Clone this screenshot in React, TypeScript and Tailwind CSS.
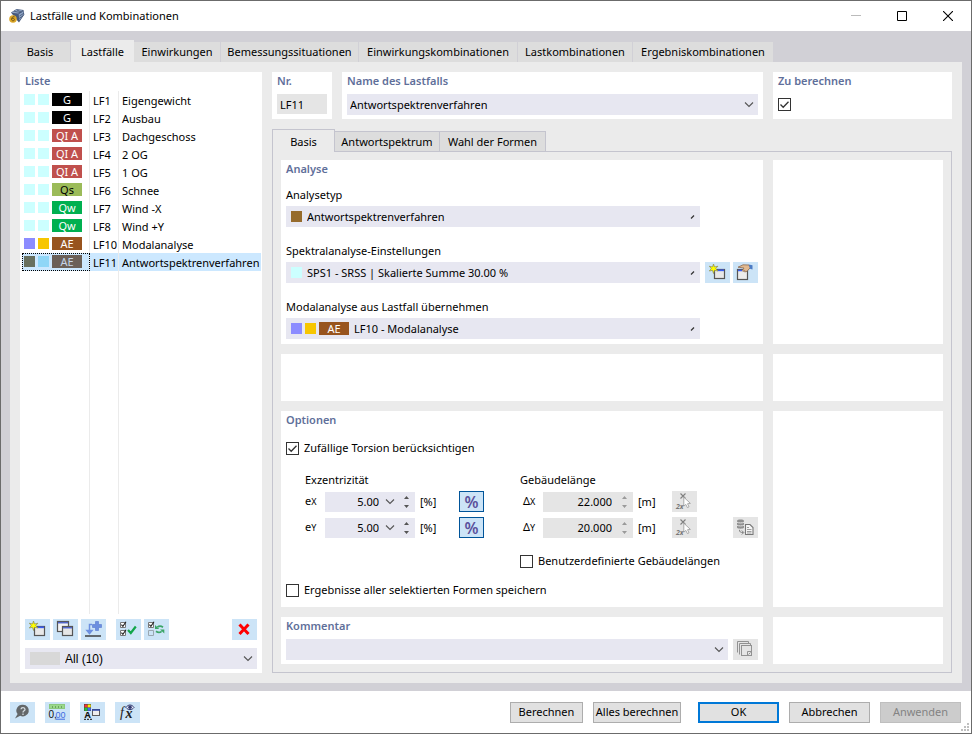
import React from 'react';

type LoadCase = {
  no: string;
  name: string;
  tag: string;
  badge: string;
  left: string;
  right: string;
  selected?: boolean;
};

const loadCases: LoadCase[] = [
  { no: 'LF1', name: 'Eigengewicht', tag: 'G', badge: 'bg-black text-white', left: 'bg-[#ccffff]', right: 'bg-[#ccffff]' },
  { no: 'LF2', name: 'Ausbau', tag: 'G', badge: 'bg-black text-white', left: 'bg-[#ccffff]', right: 'bg-[#ccffff]' },
  { no: 'LF3', name: 'Dachgeschoss', tag: 'QI A', badge: 'bg-[#c0504d] text-white', left: 'bg-[#ccffff]', right: 'bg-[#ccffff]' },
  { no: 'LF4', name: '2 OG', tag: 'QI A', badge: 'bg-[#c0504d] text-white', left: 'bg-[#ccffff]', right: 'bg-[#ccffff]' },
  { no: 'LF5', name: '1 OG', tag: 'QI A', badge: 'bg-[#c0504d] text-white', left: 'bg-[#ccffff]', right: 'bg-[#ccffff]' },
  { no: 'LF6', name: 'Schnee', tag: 'Qs', badge: 'bg-[#9bbb59] text-black', left: 'bg-[#ccffff]', right: 'bg-[#ccffff]' },
  { no: 'LF7', name: 'Wind -X', tag: 'Qw', badge: 'bg-[#00b050] text-white', left: 'bg-[#ccffff]', right: 'bg-[#ccffff]' },
  { no: 'LF8', name: 'Wind +Y', tag: 'Qw', badge: 'bg-[#00b050] text-white', left: 'bg-[#ccffff]', right: 'bg-[#ccffff]' },
  { no: 'LF10', name: 'Modalanalyse', tag: 'AE', badge: 'bg-[#98541e] text-white', left: 'bg-[#8c8cff]', right: 'bg-[#f7c600]' },
  { no: 'LF11', name: 'Antwortspektrenverfahren', tag: 'AE', badge: 'bg-[#6b6058] text-[#c5d5e8]', left: 'bg-[#68705f]', right: 'bg-[#8fd6f7]', selected: true },
];

const mainTabs = [
  { label: 'Basis', width: 'w-[61px]' },
  { label: 'Lastfälle', width: 'w-[63px]', active: true },
  { label: 'Einwirkungen', width: 'w-[87px]' },
  { label: 'Bemessungssituationen', width: 'w-[138px]' },
  { label: 'Einwirkungskombinationen', width: 'w-[159px]' },
  { label: 'Lastkombinationen', width: 'w-[115px]' },
  { label: 'Ergebniskombinationen', width: 'w-[141px]' },
];

/* Icons */

const Svg = ({ children }: { children: React.ReactNode }) => (
  <svg width="25" height="21" viewBox="0 0 25 21" fill="none" aria-hidden="true" className="block shrink-0">
    {children}
  </svg>
);

const NewIcon = () => (
  <Svg>
    <rect x="9.5" y="7.5" width="10" height="9" fill="#e8e8e8" stroke="#555" strokeWidth="1.2" />
    <path d="M12.5 8.3H19" stroke="#3a5cf0" strokeWidth="1.7" />
    <path d="M8.5 2l1 3 3.4-.8-2.2 2.4L12.9 9l-3.4-.7-1 3.2-1-3.2-3.2.7 2-2.4-2-2.4 3.2.8z" fill="#ffff00" stroke="#8a8a50" strokeWidth=".7" />
  </Svg>
);

const CopyIcon = () => (
  <Svg>
    <rect x="4.5" y="2.5" width="11" height="10" fill="#f3f3f3" stroke="#555" strokeWidth="1.2" />
    <path d="M5 3.7h10" stroke="#5064c8" strokeWidth="1.5" />
    <rect x="9.5" y="7.5" width="10" height="9" fill="#e6e6e6" stroke="#555" strokeWidth="1.2" />
    <path d="M10 8.7h9" stroke="#5064c8" strokeWidth="1.5" />
  </Svg>
);

const ImportIcon = () => (
  <Svg>
    <path d="M14.5 2.5h3v3h3v3h-3v3h-3v-3h-3v-3h3z" fill="#6c8fe0" stroke="#5577cc" strokeWidth=".6" />
    <path d="M11 5.5H8.5V13M6 11.5l2.5 3 2.5-3z" stroke="#6c8fe0" strokeWidth="1.5" />
    <path d="M4 17h16" stroke="#333" strokeWidth="1.4" />
  </Svg>
);

const SelectAllIcon = () => (
  <Svg>
    <path d="M4.5 3.5h5v5h-5zM4.5 11.5h5v5h-5z" fill="#fff" stroke="#777" />
    <path d="M5.4 5.7l1.5 1.7L10 2.7M5.4 13.7l1.5 1.7 3.1-4.7" stroke="#222" strokeWidth="1.1" />
    <path d="M12 11l2.8 3 5-6.5" stroke="#12a64a" strokeWidth="2.2" />
  </Svg>
);

const InvertIcon = () => (
  <Svg>
    <path d="M4.5 3.5h5v5h-5z" fill="#fff" stroke="#777" />
    <path d="M4.5 11.5h5v5h-5z" stroke="#9aa7b0" />
    <path d="M5.4 5.7l1.5 1.7L10 2.7" stroke="#222" strokeWidth="1.1" />
    <path d="M19 8.2c-2-1.5-4.3-1.2-5.6 0M12 12.3c2 1.5 4.3 1.2 5.6 0" stroke="#3ba567" strokeWidth="1.7" />
    <path d="M11 6v4h4.2zM20.3 14.4v-4h-4.2z" fill="#3ba567" />
  </Svg>
);

const DeleteIcon = () => (
  <Svg>
    <path d="M7.5 5.5l9 9.5M16.5 5.5l-9 9.5" stroke="#f00" strokeWidth="3" />
  </Svg>
);

const EditIcon = () => (
  <Svg>
    <rect x="4.5" y="7.5" width="10" height="10" fill="#ececec" stroke="#555" strokeWidth="1.2" />
    <path d="M5 8.5h4" stroke="#3a5cf0" strokeWidth="1.5" />
    <path d="M5 5.2l5-2.4 6 .2 1.5 2.4L14 9.3l-2.3.7.2-1.4-2 .8-.2-1.5L11 6z" fill="#e2b98f" stroke="#8b6b52" strokeWidth=".8" />
    <path d="M15.7 2.5l3.8.8v4.3l-2.5-.9z" fill="#4c7bc4" />
  </Svg>
);

const PickIcon = () => (
  <Svg>
    <path d="M8.5 2.5l5 5M13.5 2.5l-5 5" stroke="#808080" strokeWidth="1.1" />
    <path d="M11.8 6.2v9l2-1.8 1.6 3.2 1.6-.8-1.5-3.1 2.9-.3z" fill="#fff" stroke="#999" strokeWidth=".8" />
    <text x="4" y="17.5" fontSize="7" fill="#777" className="font-bold italic">2x</text>
  </Svg>
);

const DatabaseIcon = () => (
  <Svg>
    <path d="M4 3.7c0-1.6 7-1.6 7 0v6.8c0 1.6-7 1.6-7 0z" fill="#909090" />
    <path d="M4 5.2c1.5 1 5.5 1 7 0M4 8.2c1.5 1 5.5 1 7 0" stroke="#e5e5e5" />
    <path d="M6.5 12.8c0 2.2.8 2.7 3.8 2.7M8.8 13.5l2 2-2 2" stroke="#808080" />
    <path d="M12.5 7.5h4.5l3 3v7h-7.5z" fill="#f6f6f6" stroke="#777" strokeWidth="1.1" />
    <path d="M14 10.5h2M14 12.5h4.5M14 14.5h4.5M14 16h4.5" stroke="#888" strokeWidth=".8" />
  </Svg>
);

const PagesIcon = () => (
  <Svg>
    <path d="M4.5 13.5v-11h11v2M6.5 15.5v-11h11v2" stroke="#929292" />
    <rect x="8.5" y="6.5" width="10" height="10" stroke="#929292" />
    <path d="M14.5 12.5h4v4h-4zM15.5 15.5l2-2" stroke="#929292" />
  </Svg>
);

const HelpIcon = () => (
  <Svg>
    <path d="M13 2.8a6 5.8 0 1 1-2.8 11L5 16.5l2.6-4.4A6 5.8 0 0 1 13 2.8z" fill="#636769" />
    <path d="M11 7.2c.2-2.2 4-2.2 4 .2 0 1.4-2 1.4-2 3.1M13 11.5v1.4" stroke="#d5dde2" strokeWidth="1.3" />
  </Svg>
);

const UnitsIcon = () => (
  <Svg>
    <rect x="4.5" y="2.5" width="15" height="4" fill="#9bd88b" stroke="#8bc97d" />
    <path d="M7.5 4v2M10.5 4v2M13.5 4v2M16.5 4v2" stroke="#6aa55f" />
    <text x="3.5" y="15.5" fontSize="10" fill="#111" className="font-['Liberation_Sans',sans-serif]">0,</text>
    <text x="10.5" y="15.5" fontSize="9" fill="#3d6be0" className="font-['Liberation_Sans',sans-serif]">00</text>
    <path d="M11 17.2h9" stroke="#3d6be0" />
  </Svg>
);

const DisplayIcon = () => (
  <Svg>
    <rect x="4" y="2" width="7" height="7" fill="#444" />
    <rect x="4.5" y="2.5" width="3" height="3" fill="#f33" />
    <rect x="7.7" y="2.5" width="3" height="3" fill="#fe0" />
    <rect x="4.5" y="5.7" width="3" height="3" fill="#2c3" />
    <rect x="7.7" y="5.7" width="3" height="3" fill="#46f" />
    <text x="4.5" y="16" fontSize="9" fill="#111" className="font-bold">A</text>
    <path d="M4 17.3h8" stroke="#111" strokeDasharray="2 1" />
    <rect x="12.5" y="7.5" width="7" height="6" fill="#eee" stroke="#5c5c5c" />
    <path d="M12 8h8" stroke="#2b44a8" strokeWidth="1.5" />
  </Svg>
);

const FormulaIcon = () => (
  <Svg>
    <text x="5" y="14.5" fontSize="14" fill="#222" className="font-['Liberation_Serif',serif] italic">f</text>
    <text x="10.5" y="15.5" fontSize="14" fill="#222" className="font-['Liberation_Serif',serif] italic font-bold">x</text>
    <path d="M11 5.5c2-3.3 6-3.3 8 0-2 2.8-6 2.8-8 0z" fill="#e8eefc" stroke="#333a70" />
    <circle cx="15" cy="5.2" r="1.8" fill="#333a70" />
  </Svg>
);

const AppIcon = () => (
  <svg width="16" height="16" viewBox="0 0 16 16" aria-hidden="true">
    <path d="M2 4.5L7.5 1l7 1 .8 4.5L10 14.5 7 11z" fill="#46597c" />
    <path d="M2.5 4.8L7.7 1.6l6 .9-4.5 3zM9.7 6.2l4.5-3 .4 3.3-4.3 6z" fill="#8ea4c6" />
    <path d="M5 3.2l6 1.3M8 2l4.5 2.2M10.5 8l4.3-2.7M10 10.5l4.5-3" stroke="#2c3a57" strokeWidth=".6" />
    <circle cx="4" cy="11" r="3.8" fill="#dda829" />
    <path d="M5.5 8.8C3.5 8.3 2.6 9.8 2.6 11.3c0 2 2.8 2 2.8.2 0-1.4-2-1.6-2.7-.3" fill="none" stroke="#705312" />
  </svg>
);

const Chevron = ({ small }: { small?: boolean }) =>
  small ? (
    <svg width="10" height="8" viewBox="0 0 10 8" fill="none" aria-hidden="true" className="pointer-events-none mr-[2px] shrink-0">
      <path d="M3 5.5L6 2.5" stroke="#333" strokeWidth="1.3" />
    </svg>
  ) : (
    <svg width="10" height="8" viewBox="0 0 10 8" fill="none" aria-hidden="true" className="pointer-events-none mr-1 shrink-0">
      <path d="M1 1.5l4 4 4-4" stroke="#555" strokeWidth="1.1" />
    </svg>
  );

/* Controls */

type ToolProps = { label: string; disabled?: boolean; pressed?: boolean; children: React.ReactNode };

const ToolButton = ({ label, disabled, pressed, children }: ToolProps) => (
  <button
    type="button"
    aria-label={label}
    aria-pressed={pressed}
    disabled={disabled}
    className={`flex h-[21px] w-[25px] shrink-0 items-center justify-center ${disabled ? 'bg-[#e5e5e5]' : 'bg-[#cce4f7]'} ${pressed ? 'border border-[#005499]' : ''}`}
  >
    {children}
  </button>
);

type ComboProps = { id: string; label?: string; value: string; small?: boolean; children?: React.ReactNode };

const Combo = ({ id, label, value, small, children }: ComboProps) => (
  <div className="flex h-[21px] min-w-0 flex-1 items-center bg-[#e7e7f1]">
    {children}
    <select id={id} aria-label={label} defaultValue={value} className="h-full min-w-0 flex-1 appearance-none bg-transparent px-[3px] outline-none">
      <option value={value}>{value}</option>
    </select>
    <Chevron small={small} />
  </div>
);

const Swatch = ({ color }: { color: string }) => <span className={`size-[11px] shrink-0 ${color}`} />;

const Badge = ({ color, text }: { color: string; text: string }) => (
  <span className={`flex h-[13px] w-[30px] shrink-0 items-center justify-center leading-[13px] whitespace-nowrap ${color}`}>{text}</span>
);

const Tick = ({ id, label, checked }: { id: string; label?: string; checked?: boolean }) => (
  <span className="grid size-[13px] shrink-0">
    <input id={id} type="checkbox" aria-label={label} defaultChecked={checked} className="peer col-start-1 row-start-1 size-[13px] appearance-none border border-[#333] bg-white" />
    <svg viewBox="0 0 13 13" fill="none" aria-hidden="true" className="pointer-events-none invisible col-start-1 row-start-1 size-[13px] peer-checked:visible">
      <path d="M2.5 6.5L5.2 9.3l5.3-5.6" stroke="#333" strokeWidth="1.3" />
    </svg>
  </span>
);

const Check = ({ id, label, checked }: { id: string; label: string; checked?: boolean }) => (
  <div className="flex h-4 items-center gap-[5px]">
    <Tick id={id} checked={checked} />
    <label htmlFor={id}>{label}</label>
  </div>
);

const Card = ({ title, className = '', children }: { title?: string; className?: string; children?: React.ReactNode }) => (
  <section className={`bg-white px-[5px] ${className}`}>
    {title && <h2 className="h-[22px] font-semibold leading-[18px] text-[#5f6f9a]">{title}</h2>}
    {children}
  </section>
);

type SpinProps = { id: string; axis: string; symbol: string; value: string; unit: string; list?: boolean; disabled?: boolean };

const SpinField = ({ id, axis, symbol, value, unit, list, disabled }: SpinProps) => (
  <>
    <label htmlFor={id} className="w-5 shrink-0">
      {symbol}
      <span className="text-[9px]">{axis}</span>
    </label>
    <div className={`flex h-5 w-[90px] shrink-0 items-center ${disabled ? 'bg-[#e5e5e5]' : 'bg-[#e7e7f1]'}`}>
      <input id={id} type="text" defaultValue={value} disabled={disabled} className={`h-full min-w-0 flex-1 bg-transparent text-right outline-none ${list ? 'pr-[6px]' : 'pr-[9px]'}`} />
      {list && <Chevron />}
      <svg width="7" height="14" viewBox="0 0 7 14" aria-hidden="true" className={`mr-[5px] shrink-0 ${list ? 'ml-1' : ''}`}>
        <path d="M3.5 1L6 4H1zM3.5 13L6 10H1z" fill={disabled ? '#9a9a9a' : '#555'} />
      </svg>
    </div>
    <span className="ml-[5px] w-[34px] shrink-0">{unit}</span>
  </>
);

const App: React.FC = () => {
  return (
    <div className="relative flex min-h-screen flex-col border border-[#6b6b6b] bg-white font-['Noto_Sans',sans-serif] text-[11px] leading-4 text-black">
      {/* Title bar */}
      <header className="flex h-[30px] items-center pl-2">
        <AppIcon />
        <h1 className="ml-[5px] flex-1">Lastfälle und Kombinationen</h1>
        <button type="button" aria-label="Minimieren" disabled className="flex h-full w-[46px] items-center justify-center">
          <svg width="10" height="10" viewBox="0 0 10 10"><path d="M0 4.5h10" stroke="#bbb" /></svg>
        </button>
        <button type="button" aria-label="Maximieren" className="flex h-full w-[46px] items-center justify-center">
          <svg width="10" height="10" viewBox="0 0 10 10"><path d="M.5.5h9v9h-9z" fill="none" stroke="#000" /></svg>
        </button>
        <button type="button" aria-label="Schließen" className="flex h-full w-[46px] items-center justify-center">
          <svg width="10" height="10" viewBox="0 0 10 10"><path d="M0 0l10 10M10 0L0 10" stroke="#000" strokeWidth="1.1" /></svg>
        </button>
      </header>

      <main className="flex flex-1 flex-col bg-[#d1d0d6] px-[9px] pt-[9px] pb-2">
        <nav className="flex h-[22px] items-end" role="tablist">
          {mainTabs.map((tab) => (
            <button
              key={tab.label}
              type="button"
              role="tab"
              aria-selected={!!tab.active}
              className={`shrink-0 whitespace-nowrap ${tab.width} ${tab.active ? 'h-[22px] bg-[#ebebeb] pt-[2px]' : 'h-5 border-r border-[#d1d0d6] bg-[#dddddd]'}`}
            >
              {tab.label}
            </button>
          ))}
        </nav>

        <div className="flex flex-1 gap-[10px] bg-[#ebebeb] p-[10px]">
          {/* Load case list */}
          <section className="flex w-[242px] shrink-0 flex-col bg-white">
            <h2 className="h-[19px] px-[5px] font-semibold leading-[18px] text-[#5f6f9a]">Liste</h2>
            <div className="grid flex-1 pr-px pl-[2px]">
              <table className="w-full table-fixed border-separate border-spacing-0">
                <colgroup>
                  <col className="w-[68px]" />
                  <col className="w-[29px]" />
                  <col />
                </colgroup>
                <tbody>
                  {loadCases.map((lc) => (
                    <tr key={lc.no} className={lc.selected ? 'bg-[#cce8ff]' : ''}>
                      <td className={`h-[18px] border-r border-[#ebebeb] p-0 ${lc.selected ? 'outline-1 -outline-offset-1 outline-dotted outline-black' : ''}`}>
                        <div className="flex items-center gap-[3px] pb-px pl-[2px]">
                          <Swatch color={lc.left} />
                          <Swatch color={lc.right} />
                          <Badge color={lc.badge} text={lc.tag} />
                        </div>
                      </td>
                      <td className="h-[18px] border-r border-[#ebebeb] p-0 pt-[2px] pl-[3px]">{lc.no}</td>
                      <td className="h-[18px] p-0 pt-[2px] pl-[3px] whitespace-nowrap">{lc.name}</td>
                    </tr>
                  ))}
                  <tr aria-hidden="true">
                    <td className="border-r border-[#ebebeb] p-0" />
                    <td className="border-r border-[#ebebeb] p-0" />
                    <td className="p-0" />
                  </tr>
                </tbody>
              </table>
            </div>
            <div className="flex gap-[3px] px-[5px] pt-[5px]">
              <ToolButton label="Neu"><NewIcon /></ToolButton>
              <ToolButton label="Kopieren"><CopyIcon /></ToolButton>
              <ToolButton label="Importieren"><ImportIcon /></ToolButton>
              <div className="ml-[7px] flex flex-1 gap-[3px]">
                <ToolButton label="Alle auswählen"><SelectAllIcon /></ToolButton>
                <ToolButton label="Auswahl umkehren"><InvertIcon /></ToolButton>
              </div>
              <ToolButton label="Löschen"><DeleteIcon /></ToolButton>
            </div>
            <div className="flex px-[5px] pt-2 pb-1 font-['Liberation_Sans',sans-serif] text-xs">
              <Combo id="filter" label="Filter" value="All (10)">
                <span className="mr-[2px] ml-[5px] h-[13px] w-[30px] bg-[#d8d8d8]" />
              </Combo>
            </div>
          </section>

          {/* Details of the selected load case */}
          <div className="flex min-w-0 flex-1 flex-col">
            <div className="flex gap-[10px]">
              <Card title="Nr." className="w-[60px] shrink-0 pb-[5px]">
                <input type="text" readOnly aria-label="Nr." value="LF11" className="block h-5 w-full bg-[#e5e5e5] px-[3px] outline-none" />
              </Card>
              <Card title="Name des Lastfalls" className="min-w-0 flex-1 pb-1">
                <div className="flex">
                  <Combo id="name" label="Name des Lastfalls" value="Antwortspektrenverfahren" />
                </div>
              </Card>
              <Card title="Zu berechnen" className="w-[179px] shrink-0">
                <div className="flex h-[21px] items-center">
                  <Tick id="calculate" label="Zu berechnen" checked />
                </div>
              </Card>
            </div>

            <div className="mt-[10px] flex items-end" role="tablist">
              <button type="button" role="tab" aria-selected="true" className="z-10 -mb-px h-[23px] w-[63px] border border-b-0 border-[#c4c4ce] bg-[#ebebeb] pt-[2px]">Basis</button>
              <button type="button" role="tab" aria-selected="false" className="h-5 w-[105px] border border-b-0 border-l-0 border-[#c4c4ce] bg-[#dddddd]">Antwortspektrum</button>
              <button type="button" role="tab" aria-selected="false" className="h-5 w-[106px] border border-b-0 border-l-0 border-[#c4c4ce] bg-[#dddddd]">Wahl der Formen</button>
            </div>

            <div className="grid flex-1 grid-cols-[minmax(0,1fr)_170px] grid-rows-[184px_47px_1fr_47px] gap-[10px] border border-[#c4c4ce] p-2">
              <Card title="Analyse">
                <div className="grid grid-cols-[minmax(0,1fr)_53px] gap-x-[5px]">
                  <label htmlFor="type" className="col-span-2 mt-[5px] mb-[3px]">Analysetyp</label>
                  <Combo id="type" value="Antwortspektrenverfahren" small>
                    <span className="mr-[2px] ml-[5px] flex"><Swatch color="bg-[#966b2c]" /></span>
                  </Combo>
                  <label htmlFor="spectral" className="col-span-2 mt-4 mb-[3px]">Spektralanalyse-Einstellungen</label>
                  <Combo id="spectral" value="SPS1 - SRSS | Skalierte Summe 30.00 %" small>
                    <span className="mr-[2px] ml-[5px] flex"><Swatch color="bg-[#ccffff]" /></span>
                  </Combo>
                  <div className="flex gap-[3px]">
                    <ToolButton label="Neue Einstellungen"><NewIcon /></ToolButton>
                    <ToolButton label="Einstellungen bearbeiten"><EditIcon /></ToolButton>
                  </div>
                  <label htmlFor="modal" className="col-span-2 mt-4 mb-[3px]">Modalanalyse aus Lastfall übernehmen</label>
                  <Combo id="modal" value="LF10 - Modalanalyse" small>
                    <span className="mr-[2px] ml-[5px] flex items-center gap-[3px]">
                      <Swatch color="bg-[#8c8cff]" />
                      <Swatch color="bg-[#f7c600]" />
                      <Badge color="bg-[#98541e] text-white" text="AE" />
                    </span>
                  </Combo>
                </div>
              </Card>
              <Card />
              <Card />
              <Card />

              <Card title="Optionen" className="pb-1">
                <div className="mt-[7px]">
                  <Check id="torsion" label="Zufällige Torsion berücksichtigen" checked />
                </div>
                <div className="mt-4 flex pl-[19px]">
                  <fieldset className="w-[215px] shrink-0">
                    <legend className="mb-[3px] h-4">Exzentrizität</legend>
                    <div className="mb-[5px] flex h-[21px] items-center">
                      <SpinField id="ex" symbol="e" axis="X" value="5.00" unit="[%]" list />
                      <div className="ml-[5px]">
                        <ToolButton label="Prozent" pressed><span className="text-base font-semibold text-[#5b519c]">%</span></ToolButton>
                      </div>
                    </div>
                    <div className="flex h-[21px] items-center">
                      <SpinField id="ey" symbol="e" axis="Y" value="5.00" unit="[%]" list />
                      <div className="ml-[5px]">
                        <ToolButton label="Prozent" pressed><span className="text-base font-semibold text-[#5b519c]">%</span></ToolButton>
                      </div>
                    </div>
                  </fieldset>
                  <fieldset className="min-w-0 flex-1">
                    <legend className="mb-[3px] h-4">Gebäudelänge</legend>
                    <div className="mb-[5px] flex h-[21px] items-center pl-[3px]">
                      <SpinField id="dx" symbol="Δ" axis="X" value="22.000" unit="[m]" disabled />
                      <ToolButton label="Zwei Punkte wählen" disabled><PickIcon /></ToolButton>
                    </div>
                    <div className="flex h-[21px] items-center pl-[3px]">
                      <SpinField id="dy" symbol="Δ" axis="Y" value="20.000" unit="[m]" disabled />
                      <ToolButton label="Zwei Punkte wählen" disabled><PickIcon /></ToolButton>
                      <div className="ml-auto">
                        <ToolButton label="Aus Datenbank übernehmen" disabled><DatabaseIcon /></ToolButton>
                      </div>
                    </div>
                    <div className="mt-[15px]">
                      <Check id="custom" label="Benutzerdefinierte Gebäudelängen" />
                    </div>
                  </fieldset>
                </div>
                <div className="mt-[13px]">
                  <Check id="save" label="Ergebnisse aller selektierten Formen speichern" />
                </div>
              </Card>
              <Card />

              <Card title="Kommentar">
                <div className="flex gap-[5px]">
                  <Combo id="comment" label="Kommentar" value="" />
                  <ToolButton label="Kommentare" disabled><PagesIcon /></ToolButton>
                </div>
              </Card>
              <Card />
            </div>
          </div>
        </div>
      </main>

      {/* Dialog buttons */}
      <footer className="flex h-[42px] items-center gap-[10px] pr-[10px] pl-[9px]">
        <ToolButton label="Hilfe"><HelpIcon /></ToolButton>
        <ToolButton label="Einheiten"><UnitsIcon /></ToolButton>
        <ToolButton label="Anzeige"><DisplayIcon /></ToolButton>
        <ToolButton label="Formeln"><FormulaIcon /></ToolButton>
        <button type="button" className="ml-auto h-[21px] w-[73px] border border-[#adadad] bg-[#e1e1e1]">Berechnen</button>
        <button type="button" className="h-[21px] w-[88px] border border-[#adadad] bg-[#e1e1e1] whitespace-nowrap">Alles berechnen</button>
        <button type="button" className="ml-[7px] h-[21px] w-[81px] border-2 border-[#0078d7] bg-[#e1e1e1]">OK</button>
        <button type="button" className="h-[21px] w-[81px] border border-[#adadad] bg-[#e1e1e1]">Abbrechen</button>
        <button type="button" disabled className="h-[21px] w-[81px] border border-[#bfbfbf] bg-[#cccccc] text-[#838383]">Anwenden</button>
      </footer>
      <svg width="8" height="8" viewBox="0 0 8 8" aria-hidden="true" className="absolute right-[2px] bottom-[2px]">
        <path d="M6 0h2v2H6zM3 3h2v2H3zM6 3h2v2H6zM0 6h2v2H0zM3 6h2v2H3zM6 6h2v2H6z" fill="#bfbfbf" />
      </svg>
    </div>
  );
};

export default App;
